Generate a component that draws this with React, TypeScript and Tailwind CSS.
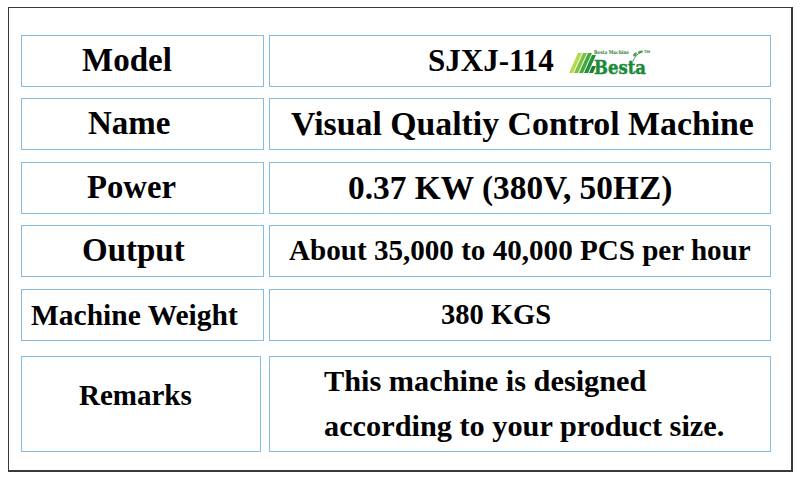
import React from "react";

const serif = { fontFamily: '"Liberation Serif", "Times New Roman", serif' };

function BestaLogo() {
  return (
    <svg width="84" height="28" viewBox="0 0 84 28" className="mt-[2px]">
      <polygon points="0,25 4,25 13,5 9,5" fill="#b5d84f" />
      <polygon points="5,25 9,25 18,5 14,5" fill="#7cc242" />
      <polygon points="10,25 14,25 23,5 19,5" fill="#45a83f" />
      <polygon points="15,25 19,25 27,7 23,7" fill="#22903a" />
      <polygon points="20,25 24,25 27,18 23,18" fill="#1a7f34" />
      <text
        x="25"
        y="5.8"
        fontSize="5"
        fontWeight="bold"
        fill="#2f7d32"
        textLength="35"
        lengthAdjust="spacingAndGlyphs"
        style={{ fontFamily: '"DejaVu Serif", serif' }}
      >
        Besta Machine
      </text>
      <path d="M64 13 C 66 9, 68 6, 72 4" stroke="#2e8b3a" strokeWidth="0.9" fill="none" />
      <ellipse cx="66" cy="6.5" rx="2.4" ry="1.3" fill="#3fa34a" transform="rotate(-45 66 6.5)" />
      <ellipse cx="71.5" cy="4" rx="2.6" ry="1.3" fill="#3fa34a" transform="rotate(-15 71.5 4)" />
      <text x="75" y="5" fontSize="3.6" fill="#2f7d32" style={{ fontFamily: '"DejaVu Sans", sans-serif' }}>
        TM
      </text>
      <text
        x="25"
        y="25.5"
        fontSize="19"
        fontWeight="bold"
        fill="#1d8a3b"
        stroke="#1d8a3b"
        strokeWidth="0.5"
        textLength="52"
        lengthAdjust="spacingAndGlyphs"
        style={{ fontFamily: '"DejaVu Serif", serif' }}
      >
        Besta
      </text>
    </svg>
  );
}

export default function App() {
  const cell = "border border-[#86bbe3] flex items-center";
  return (
    <div className="w-[800px] h-[481px] bg-white pt-[7px] pl-[8px]" style={serif}>
      <div className="w-[785px] h-[465px] border-l border-t border-r-2 border-b-2 border-[#3a3a3a] pl-[12px] pt-[27px] flex flex-col text-black font-bold">
        {/* Row 1 */}
        <div className="flex gap-[5px] h-[52px]">
          <div className={`${cell} w-[243px] pl-[60px] text-[33px]`}>Model</div>
          <div className={`${cell} w-[502px] pl-[158px] gap-[15px]`}>
            <span className="text-[31px] whitespace-nowrap">SJXJ-114</span>
            <BestaLogo />
          </div>
        </div>
        {/* Row 2 */}
        <div className="flex gap-[5px] h-[52px] mt-[11px]">
          <div className={`${cell} w-[243px] pl-[66px] text-[33px]`}>Name</div>
          <div className={`${cell} w-[502px] pl-[21px] text-[33.8px] whitespace-nowrap`}>
            Visual Qualtiy Control Machine
          </div>
        </div>
        {/* Row 3 */}
        <div className="flex gap-[5px] h-[52px] mt-[12px]">
          <div className={`${cell} w-[243px] pl-[65px] text-[32.7px]`}>Power</div>
          <div className={`${cell} w-[502px] pl-[78px] text-[33.4px] whitespace-nowrap`}>
            0.37 KW (380V, 50HZ)
          </div>
        </div>
        {/* Row 4 */}
        <div className="flex gap-[5px] h-[52px] mt-[11px]">
          <div className={`${cell} w-[243px] pl-[60px] text-[33px]`}>Output</div>
          <div className={`${cell} w-[502px] pl-[19px] text-[29.1px] whitespace-nowrap`}>
            About 35,000 to 40,000 PCS per hour
          </div>
        </div>
        {/* Row 5 */}
        <div className="flex gap-[5px] h-[52px] mt-[12px]">
          <div className={`${cell} w-[243px] pl-[9px] text-[29.5px] whitespace-nowrap`}>Machine Weight</div>
          <div className={`${cell} w-[502px] pl-[171px] text-[28.5px] whitespace-nowrap`}>380 KGS</div>
        </div>
        {/* Row 6 */}
        <div className="flex gap-[8px] h-[96px] mt-[15px]">
          <div className={`${cell} w-[240px] pl-[57px] pb-[16px] text-[29px]`}>Remarks</div>
          <div className={`${cell} w-[502px] pl-[54px] text-[30.3px] leading-[45px]`}>
            <div className="whitespace-nowrap">
              This machine is designed
              <br />
              according to your product size.
            </div>
          </div>
        </div>
      </div>
    </div>
  );
}
